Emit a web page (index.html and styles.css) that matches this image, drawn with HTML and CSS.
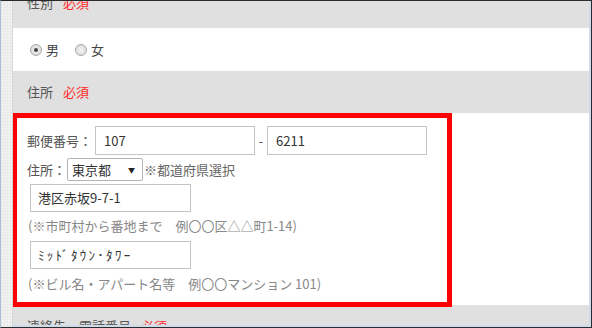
FILE: index.html
```html
<!DOCTYPE html>
<html lang="ja">
<head>
    <meta charset="UTF-8">
    <title>お客様情報入力</title>
    <link rel="stylesheet" href="styles.css">
</head>
<body>
    <div class="frame">
        <div class="side"></div>
        <div class="main">
            <div class="form-head form-head-top">性別<span class="required">必須</span></div>
            <div class="form-body radio-row">
                <label class="radio"><span class="radio-mark checked"></span>男</label>
                <label class="radio"><span class="radio-mark"></span>女</label>
            </div>
            <div class="form-head">住所<span class="required">必須</span></div>
            <div class="form-body address-body">
                <div class="highlight">
                    <div class="line zip-line">
                        <span class="label">郵便番号：</span>
                        <div class="input zip">107</div>
                        <span class="dash">-</span>
                        <div class="input zip">6211</div>
                    </div>
                    <div class="line pref-line">
                        <span class="label">住所：</span>
                        <div class="select">東京都<span class="arrow">▼</span></div>
                        <span class="pref-note">※都道府県選択</span>
                    </div>
                    <div class="input addr">港区赤坂9-7-1</div>
                    <p class="note">(※市町村から番地まで　例〇〇区△△町1-14)</p>
                    <div class="input addr kana">ﾐｯﾄﾞﾀｳﾝ･ﾀﾜｰ</div>
                    <p class="note">(※ビル名・アパート名等　例〇〇マンション 101)</p>
                </div>
            </div>
            <div class="form-head">連絡先・電話番号<span class="required">必須</span></div>
        </div>
    </div>
</body>
</html>
```

FILE: styles.css
```css
body {
    margin: 0;
    width: 592px;
    height: 328px;
    overflow: hidden;
    font-family: "Noto Sans CJK JP", "Liberation Sans", sans-serif;
    font-size: 13px;
    color: #555;
    background: #fff;
}

.frame {
    box-sizing: border-box;
    height: 328px;
    display: flex;
    border: 1px solid #2b2b2b;
    border-left-color: #a9c0d6;
}

.side {
    width: 11px;
    flex-shrink: 0;
    border-right: 1px solid #d6d6d6;
    background-color: #f3f3f3;
    background-image:
        linear-gradient(#e9e9e9 1px, transparent 1px),
        linear-gradient(90deg, #e9e9e9 1px, transparent 1px);
    background-size: 3px 3px;
}

.main {
    flex: 1;
    overflow: hidden;
    border-right: 2px solid #cddcea;
    border-bottom: 2px solid #cddcea;
    background: #fff;
}

.form-head {
    height: 42px;
    line-height: 42px;
    padding-left: 14px;
    background: #e0e0e0;
    color: #555;
}

/* only the lower part of this row is in view */
.form-head-top {
    margin-top: -18px;
    height: 45px;
    line-height: 40px;
}

.required {
    color: #ff2a2a;
    margin-left: 10px;
}

.form-body {
    background: #fff;
}

.radio-row {
    height: 43px;
    display: flex;
    align-items: center;
    padding-left: 17px;
    gap: 16px;
}

.radio {
    display: flex;
    align-items: center;
    gap: 4px;
    color: #444;
}

.radio-mark {
    width: 10px;
    height: 10px;
    border-radius: 50%;
    border: 1px solid #a8a8a8;
    background: radial-gradient(circle, #f2f2f2 0%, #d6d6d6 100%);
    position: relative;
}

.radio-mark.checked::after {
    content: '';
    position: absolute;
    left: 3px;
    top: 3px;
    width: 4px;
    height: 4px;
    border-radius: 50%;
    background: #444;
}

.address-body {
    height: 192px;
}

.highlight {
    box-sizing: border-box;
    width: 440px;
    height: 194px;
    margin-left: -1px;
    border: 5px solid #ff0000;
    padding: 8px 0 0 10px;
    position: relative;
    z-index: 1;
    background: #fff;
}

.line {
    display: flex;
    align-items: center;
}

.zip-line {
    height: 29px;
}

.label {
    width: 68px;
    color: #555;
}

.input {
    box-sizing: border-box;
    height: 29px;
    line-height: 27px;
    border: 1px solid #c4c4c4;
    padding-left: 8px;
    color: #333;
    background: #fff;
}

.zip {
    width: 160px;
}

.dash {
    width: 12px;
    text-align: center;
}

.pref-line {
    height: 23px;
    margin-top: 3px;
}

.pref-line .label {
    width: 39px;
    margin-right: 1px;
}

.select {
    box-sizing: border-box;
    width: 76px;
    height: 23px;
    line-height: 21px;
    border: 1px solid #b4b4b4;
    border-radius: 2px;
    padding-left: 4px;
    color: #333;
    position: relative;
}

.arrow {
    position: absolute;
    right: 7px;
    top: 1px;
    font-size: 7px;
    color: #222;
}

.pref-note {
    margin-left: 1px;
    color: #666;
}

.addr {
    width: 161px;
    height: 28px;
    line-height: 26px;
    margin: 3px 0 0 3px;
    padding-left: 7px;
}

.kana {
    letter-spacing: 2.3px;
}

.note {
    margin: 2px 0 0 1px;
    height: 24px;
    line-height: 24px;
    color: #888;
}

.note + .input {
    margin-top: 3px;
}

.note:last-child {
    margin-top: 3px;
}
```
